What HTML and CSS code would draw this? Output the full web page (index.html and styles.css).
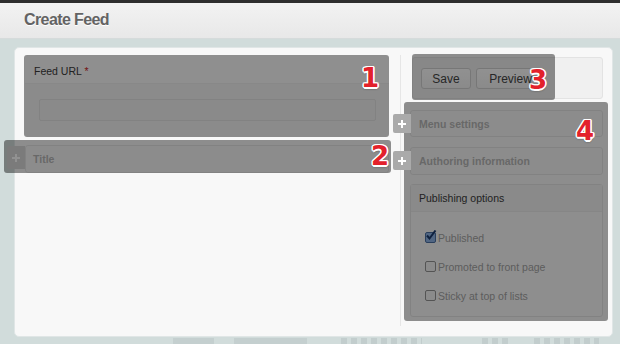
FILE: index.html
```html
<!DOCTYPE html>
<html lang="en">
<head>
    <meta charset="UTF-8">
    <meta name="viewport" content="width=device-width, initial-scale=1.0">
    <title>Create Feed</title>
    <link rel="stylesheet" href="styles.css">
</head>
<body>

    <div class="topbar"></div>

    <div class="page-header">
        <h1>Create Feed</h1>
    </div>

    <div class="page">
        <div class="card">

            <!-- main column -->
            <div class="main-col">
                <div class="field">
                    <div class="field-label">Feed URL <span class="req">*</span></div>
                    <div class="field-input"></div>
                </div>

                <div class="collapsible title-set">
                    <span class="plus plus-left"><svg width="8" height="8" viewBox="0 0 8 8"><path d="M4 0v8M0 4h8" stroke="#fff" stroke-width="2"/></svg></span>
                    Title
                </div>
            </div>

            <!-- sidebar -->
            <div class="side-col">
                <div class="actions">
                    <button class="btn btn-save">Save</button>
                    <button class="btn btn-preview">Preview</button>
                </div>

                <div class="collapsible menu-set">
                    <span class="plus"><svg width="8" height="8" viewBox="0 0 8 8"><path d="M4 0v8M0 4h8" stroke="#fff" stroke-width="2"/></svg></span>
                    Menu settings
                </div>

                <div class="collapsible author-set">
                    <span class="plus"><svg width="8" height="8" viewBox="0 0 8 8"><path d="M4 0v8M0 4h8" stroke="#fff" stroke-width="2"/></svg></span>
                    Authoring information
                </div>

                <div class="publish-set">
                    <div class="publish-head">Publishing options</div>
                    <div class="options">
                        <label class="option">
                            <span class="check checked"><svg width="12" height="12" viewBox="0 0 12 12"><path d="M2 5.5l2.5 3L10.5 0.5" fill="none" stroke="#1b3a6e" stroke-width="2"/></svg></span>
                            Published
                        </label>
                        <label class="option"><span class="check"></span>Promoted to front page</label>
                        <label class="option"><span class="check"></span>Sticky at top of lists</label>
                    </div>
                </div>
            </div>

            <!-- highlight overlays -->
            <div class="hl hl-1"></div>
            <div class="hl hl-2"></div>
            <div class="hl hl-3"></div>
            <div class="hl hl-4"></div>

            <span class="num num-1">1</span>
            <span class="num num-2">2</span>
            <span class="num num-3">3</span>
            <span class="num num-4">4</span>
        </div>

        <div class="footer-strip">
            <span class="blk b1"></span>
            <span class="blk b2"></span>
            <span class="blk dots b3"></span>
            <span class="blk dots b4"></span>
            <span class="blk dots b5"></span>
        </div>
    </div>

</body>
</html>
```

FILE: styles.css
```css
* {
    margin: 0;
    padding: 0;
    box-sizing: border-box;
}

body {
    font-family: 'Liberation Sans', Arial, sans-serif;
    background-color: #d1dcdb;
    width: 620px;
    height: 344px;
    overflow: hidden;
}

.topbar {
    height: 3px;
    background-color: #2e2e2e;
}

.page-header {
    height: 36px;
    background: linear-gradient(#f2f2f2, #e8e8e8);
    border-bottom: 1px solid #d6dbdb;
}

.page-header h1 {
    padding-left: 24px;
    line-height: 34px;
    font-size: 16px;
    font-weight: bold;
    letter-spacing: -0.6px;
    color: #636363;
    text-shadow: 0 1px 0 #ffffff;
}

.page {
    padding: 8px 0 0 14px;
}

.card {
    position: relative;
    display: flex;
    width: 599px;
    height: 290px;
    padding: 7px 9px 10px 10px;
    background-color: #f8f8f8;
    border: 1px solid #e0e6e6;
    border-radius: 5px;
}

/* main column */

.main-col {
    width: 364px;
    margin-right: 11px;
}

.field {
    height: 82px;
    background-color: #f5f5f5;
    border-radius: 3px;
}

.field-label {
    height: 29px;
    padding: 10px 9px 0;
    font-size: 10.5px;
    line-height: 12px;
    color: #3a3a3a;
    background-color: #fbfbfb;
    border-bottom: 1px solid #f0f0f0;
    border-radius: 3px 3px 0 0;
}

.req {
    color: #cc1f1f;
}

.field-input {
    height: 22px;
    margin: 15px 13px 0 14px;
    background-color: #f3f3f3;
    border: 1px solid #e4e4e4;
    border-radius: 2px;
}

.collapsible {
    position: relative;
    display: flex;
    align-items: center;
    height: 28px;
    padding-left: 8px;
    font-size: 10.5px;
    font-weight: bold;
    color: #b8b8b8;
    background-color: #f7f7f7;
    border: 1px solid #e5e5e5;
    border-radius: 3px;
}

.title-set {
    margin-top: 8px;
    padding-left: 7px;
}

.plus {
    position: absolute;
    left: -18px;
    top: 3px;
    width: 18px;
    height: 19px;
    display: flex;
    align-items: center;
    justify-content: center;
    background-color: #aaaaaa;
    border-radius: 2px 0 0 2px;
    z-index: 3;
}

.plus-left {
    left: -19px;
    top: 0;
    height: 23px;
    background-color: #d9d9d9;
    z-index: auto;
}

/* sidebar */

.side-col {
    flex: 1;
    padding-left: 9px;
    border-left: 1px solid #e6e6e6;
}

.actions {
    display: flex;
    gap: 5px;
    height: 42px;
    margin: 2px 0 0 2px;
    padding: 10px 0 0 8px;
    background-color: #f0f0f0;
    border: 1px solid #e3e3e3;
    border-radius: 3px;
}

.btn {
    height: 21px;
    font-family: 'Liberation Sans', Arial, sans-serif;
    font-size: 12px;
    color: #454545;
    background: linear-gradient(#ffffff, #f3f3f3);
    border: 1px solid #d2d2d2;
    border-radius: 3px;
}

.btn-save {
    width: 50px;
}

.btn-preview {
    width: 69px;
}

.menu-set {
    margin-top: 11px;
    height: 27px;
}

.author-set {
    margin-top: 10px;
}

.publish-set {
    height: 133px;
    margin-top: 9px;
    background-color: #fafafa;
    border: 1px solid #e5e5e5;
    border-radius: 3px;
}

.publish-head {
    height: 27px;
    padding-left: 8px;
    line-height: 27px;
    font-size: 10.5px;
    color: #3c3c3c;
    background-color: #f2f2f2;
    border-bottom: 1px solid #ececec;
}

.options {
    padding: 11px 0 0 14px;
}

.option {
    display: flex;
    align-items: center;
    gap: 2px;
    height: 29px;
    font-size: 10.5px;
    color: #a4a4a4;
}

.check {
    position: relative;
    width: 11px;
    height: 11px;
    background-color: #f4f4f4;
    border: 1px solid #949494;
    border-radius: 2px;
}

.check.checked {
    background-color: #8fb4e6;
    border-color: #4b6fa2;
}

.check svg {
    position: absolute;
    left: -1px;
    top: -3px;
}

/* highlight overlays */

.hl {
    position: absolute;
    background-color: rgba(0, 0, 0, 0.43);
    border-radius: 3px;
    z-index: 2;
}

.hl-1 { left: 9px;   top: 7px;  width: 365px; height: 82px; }
.hl-2 { left: -11px; top: 92px; width: 387px; height: 33px; }
.hl-3 { left: 397px; top: 6px;  width: 143px; height: 46px; }
.hl-4 { left: 389px; top: 54px; width: 204px; height: 219px; }

.num {
    position: absolute;
    width: 20px;
    text-align: center;
    font-family: 'DejaVu Sans', sans-serif;
    font-size: 26px;
    font-weight: bold;
    line-height: 27px;
    color: #e3212b;
    text-shadow:
        1.5px 0 0 #fff, -1.5px 0 0 #fff, 0 1.5px 0 #fff, 0 -1.5px 0 #fff,
        1px 1px 0 #fff, -1px -1px 0 #fff, 1px -1px 0 #fff, -1px 1px 0 #fff,
        0 2px 2px rgba(0, 0, 0, 0.45);
    z-index: 4;
}

.num-1 { left: 345px; top: 17px; }
.num-2 { left: 355px; top: 95px; }
.num-3 { left: 513px; top: 19px; }
.num-4 { left: 560px; top: 70px; }

/* blurred footer behind the card */

.footer-strip {
    display: flex;
    height: 6px;
    margin-top: 1px;
}

.blk {
    height: 6px;
    background-color: #c4cfcf;
}

.dots {
    background: repeating-linear-gradient(90deg, #c2cdcd 0 6px, transparent 6px 10px);
}

.b1 { margin-left: 159px; width: 41px; }
.b2 { margin-left: 20px;  width: 73px; }
.b3 { margin-left: 34px;  width: 81px; }
.b4 { margin-left: 60px;  width: 30px; }
.b5 { margin-left: 22px;  width: 65px; }
```
